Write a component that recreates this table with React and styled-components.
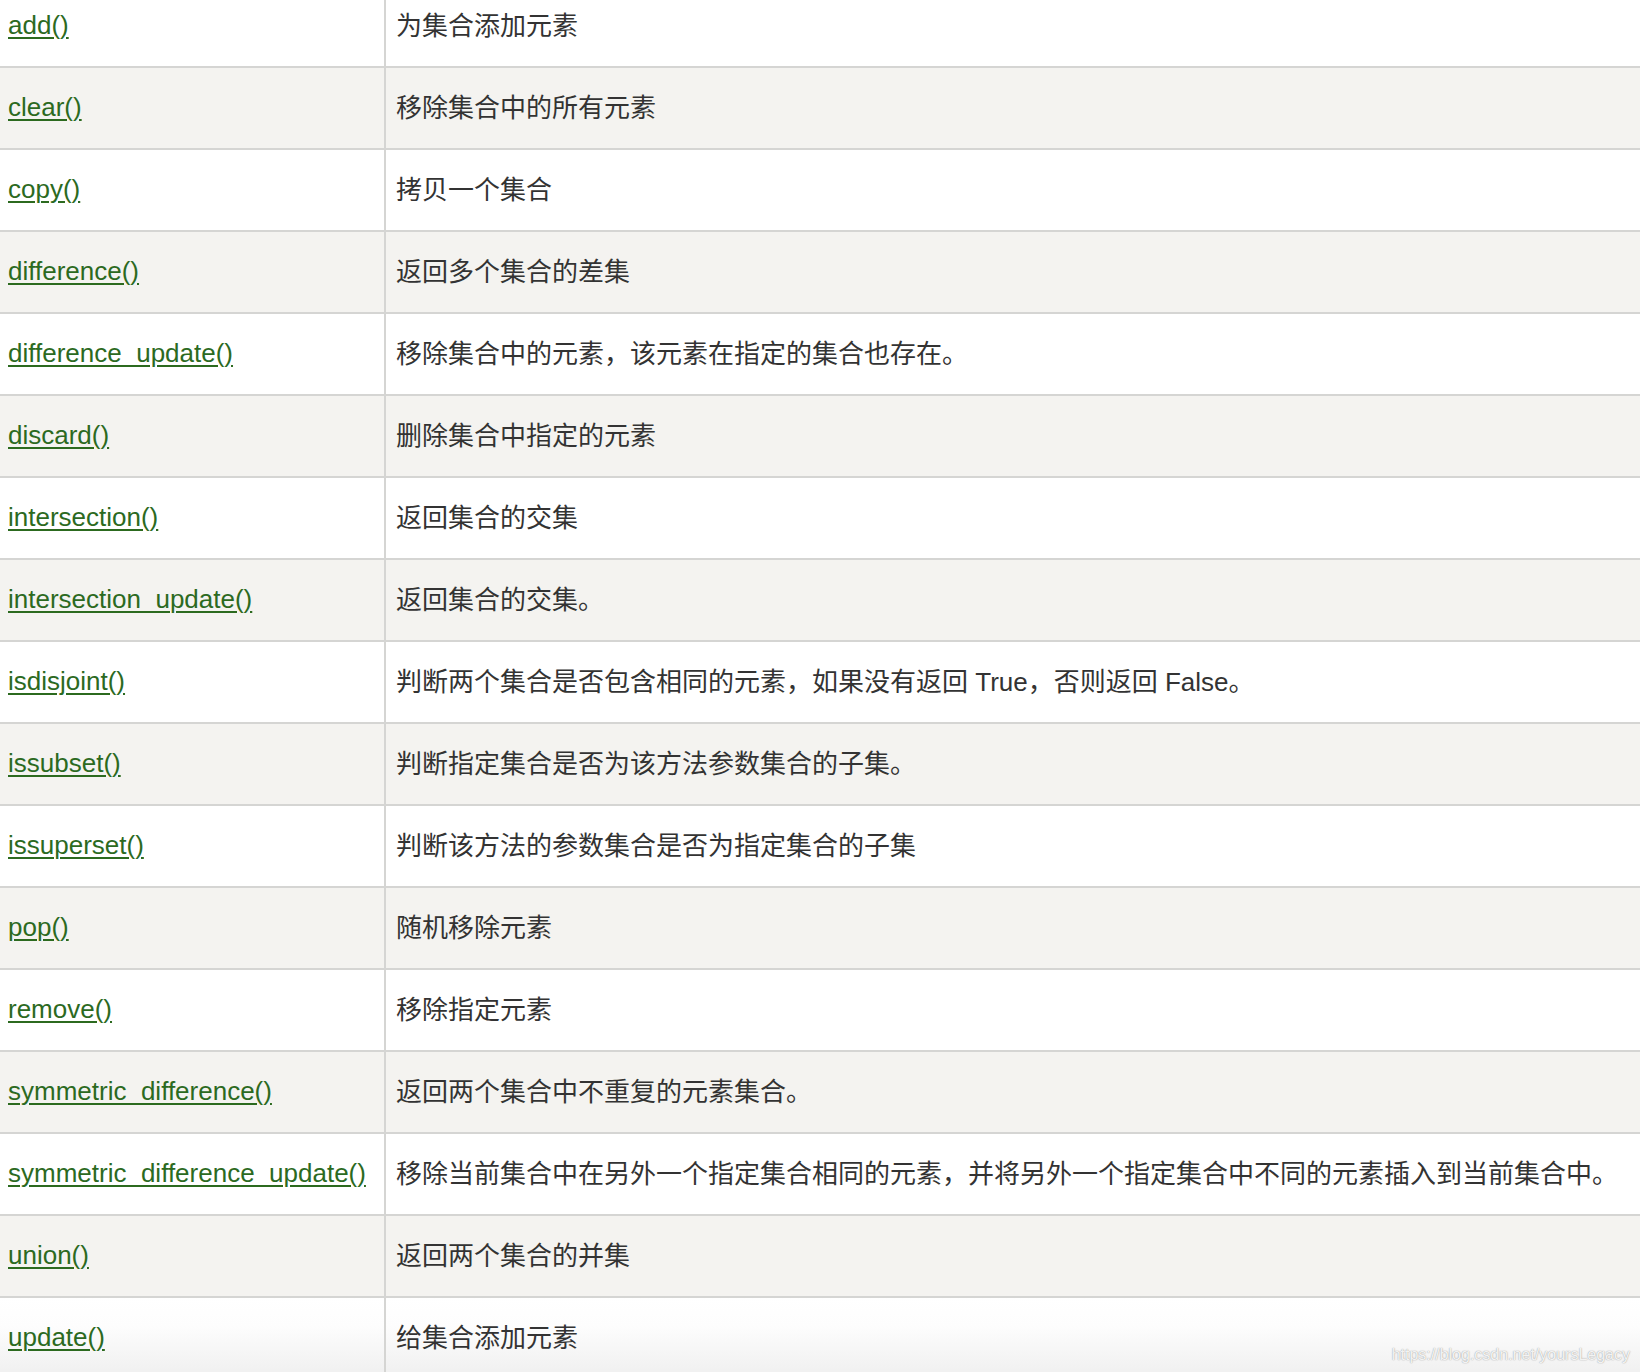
import styled, { createGlobalStyle } from 'styled-components';

const methods = [
  ['add()', '为集合添加元素'],
  ['clear()', '移除集合中的所有元素'],
  ['copy()', '拷贝一个集合'],
  ['difference()', '返回多个集合的差集'],
  ['difference_update()', '移除集合中的元素，该元素在指定的集合也存在。'],
  ['discard()', '删除集合中指定的元素'],
  ['intersection()', '返回集合的交集'],
  ['intersection_update()', '返回集合的交集。'],
  ['isdisjoint()', '判断两个集合是否包含相同的元素，如果没有返回 True，否则返回 False。'],
  ['issubset()', '判断指定集合是否为该方法参数集合的子集。'],
  ['issuperset()', '判断该方法的参数集合是否为指定集合的子集'],
  ['pop()', '随机移除元素'],
  ['remove()', '移除指定元素'],
  ['symmetric_difference()', '返回两个集合中不重复的元素集合。'],
  ['symmetric_difference_update()', '移除当前集合中在另外一个指定集合相同的元素，并将另外一个指定集合中不同的元素插入到当前集合中。'],
  ['union()', '返回两个集合的并集'],
  ['update()', '给集合添加元素'],
];

export default function App() {
  return (
    <>
      <GlobalStyle />
      <Page>
        <Table>
          {methods.map(([name, desc], i) => (
            <Row key={name} $striped={i % 2 === 1} $first={i === 0} $last={i === methods.length - 1}>
              <NameCell $first={i === 0}>
                <MethodLink href="#">{name}</MethodLink>
              </NameCell>
              <DescCell $first={i === 0}>{desc}</DescCell>
            </Row>
          ))}
        </Table>
        <Watermark>https://blog.csdn.net/yoursLegacy</Watermark>
      </Page>
    </>
  );
}

const GlobalStyle = createGlobalStyle`
  html, body {
    margin: 0;
    padding: 0;
    background: #fff;
    overflow: hidden;
  }
  body {
    font-family: "Liberation Sans", "Noto Sans CJK SC", sans-serif;
  }
`;

const Page = styled.div`
  position: relative;
  width: 1640px;
  height: 1372px;
  overflow: hidden;
`;

const Table = styled.div`
  display: flex;
  flex-direction: column;
`;

/* the first row is cut off at the top of the screenshot */
const Row = styled.div`
  display: grid;
  grid-template-columns: 386px 1fr;
  height: ${(p) => (p.$first ? '66px' : '80px')};
  border-top: ${(p) => (p.$first ? 'none' : '2px solid #d5d5d3')};
  background: ${(p) =>
    p.$last
      ? 'linear-gradient(180deg, #ffffff 0%, #fdfdfd 35%, #efefef 100%)'
      : p.$striped
      ? '#f4f3f0'
      : '#ffffff'};
`;

const NameCell = styled.div`
  display: flex;
  align-items: center;
  padding-left: 8px;
  padding-bottom: ${(p) => (p.$first ? '16px' : '2px')};
  border-right: 2px solid #d5d5d3;
  box-sizing: border-box;
`;

const MethodLink = styled.a`
  font-family: "Liberation Sans", Arial, sans-serif;
  font-size: 26px;
  color: #2c6a1f;
  text-decoration: underline;
  text-decoration-thickness: 2px;
  text-underline-offset: 3px;
`;

const DescCell = styled.div`
  display: flex;
  align-items: center;
  padding-left: 10px;
  padding-bottom: ${(p) => (p.$first ? '19px' : '5px')};
  box-sizing: border-box;
  font-size: 26px;
  color: #333;
  font-family: "Liberation Sans", "Noto Sans CJK SC", sans-serif;
  white-space: nowrap;
`;

const Watermark = styled.div`
  position: absolute;
  right: 10px;
  bottom: 8px;
  font-family: "Liberation Sans", Arial, sans-serif;
  font-size: 16px;
  color: rgba(255, 255, 255, 0.9);
  text-shadow: 0 0 1px rgba(0, 0, 0, 0.35), 0 0 2px rgba(0, 0, 0, 0.15);
`;
